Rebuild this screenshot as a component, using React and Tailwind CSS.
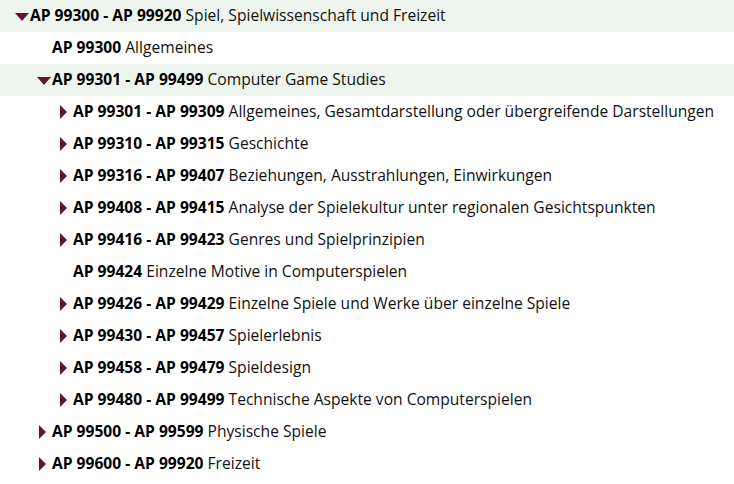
import React from "react";

const rows = [
  { code: "AP 99300 - AP 99920", label: "Spiel, Spielwissenschaft und Freizeit", level: 0, arrow: "down" },
  { code: "AP 99300", label: "Allgemeines", level: 1, arrow: null },
  { code: "AP 99301 - AP 99499", label: "Computer Game Studies", level: 1, arrow: "down" },
  { code: "AP 99301 - AP 99309", label: "Allgemeines, Gesamtdarstellung oder übergreifende Darstellungen", level: 2, arrow: "right" },
  { code: "AP 99310 - AP 99315", label: "Geschichte", level: 2, arrow: "right" },
  { code: "AP 99316 - AP 99407", label: "Beziehungen, Ausstrahlungen, Einwirkungen", level: 2, arrow: "right" },
  { code: "AP 99408 - AP 99415", label: "Analyse der Spielekultur unter regionalen Gesichtspunkten", level: 2, arrow: "right" },
  { code: "AP 99416 - AP 99423", label: "Genres und Spielprinzipien", level: 2, arrow: "right" },
  { code: "AP 99424", label: "Einzelne Motive in Computerspielen", level: 2, arrow: null },
  { code: "AP 99426 - AP 99429", label: "Einzelne Spiele und Werke über einzelne Spiele", level: 2, arrow: "right" },
  { code: "AP 99430 - AP 99457", label: "Spielerlebnis", level: 2, arrow: "right" },
  { code: "AP 99458 - AP 99479", label: "Spieldesign", level: 2, arrow: "right" },
  { code: "AP 99480 - AP 99499", label: "Technische Aspekte von Computerspielen", level: 2, arrow: "right" },
  { code: "AP 99500 - AP 99599", label: "Physische Spiele", level: 1, arrow: "right" },
  { code: "AP 99600 - AP 99920", label: "Freizeit", level: 1, arrow: "right" },
];

const textStart = [30, 52, 73];

function Row({ row }) {
  const start = textStart[row.level];
  let pad = start;
  let marker = null;
  if (row.arrow === "down") {
    pad = start - 15;
    marker = (
      <span className="mr-px h-0 w-0 shrink-0 border-x-[7px] border-t-[8px] border-x-transparent border-t-[#5a1839] translate-y-px" />
    );
  } else if (row.arrow === "right") {
    pad = start - 13;
    marker = (
      <span className="mr-[6px] h-0 w-0 shrink-0 border-y-[7px] border-l-[7px] border-y-transparent border-l-[#5a1839]" />
    );
  }
  return (
    <div
      className={`flex h-8 items-center whitespace-nowrap ${row.arrow === "down" ? "bg-[#eef5ef]" : ""}`}
      style={{ paddingLeft: pad }}
    >
      {marker}
      <span>
        <b className="font-bold text-black">{row.code}</b> <span>{row.label}</span>
      </span>
    </div>
  );
}

export default function App() {
  return (
    <div className="w-[734px] h-[484px] overflow-hidden bg-white text-[15.6px] text-[#111] font-['Open_Sans',sans-serif]">
      {rows.map((r, i) => (
        <Row key={i} row={r} />
      ))}
    </div>
  );
}
